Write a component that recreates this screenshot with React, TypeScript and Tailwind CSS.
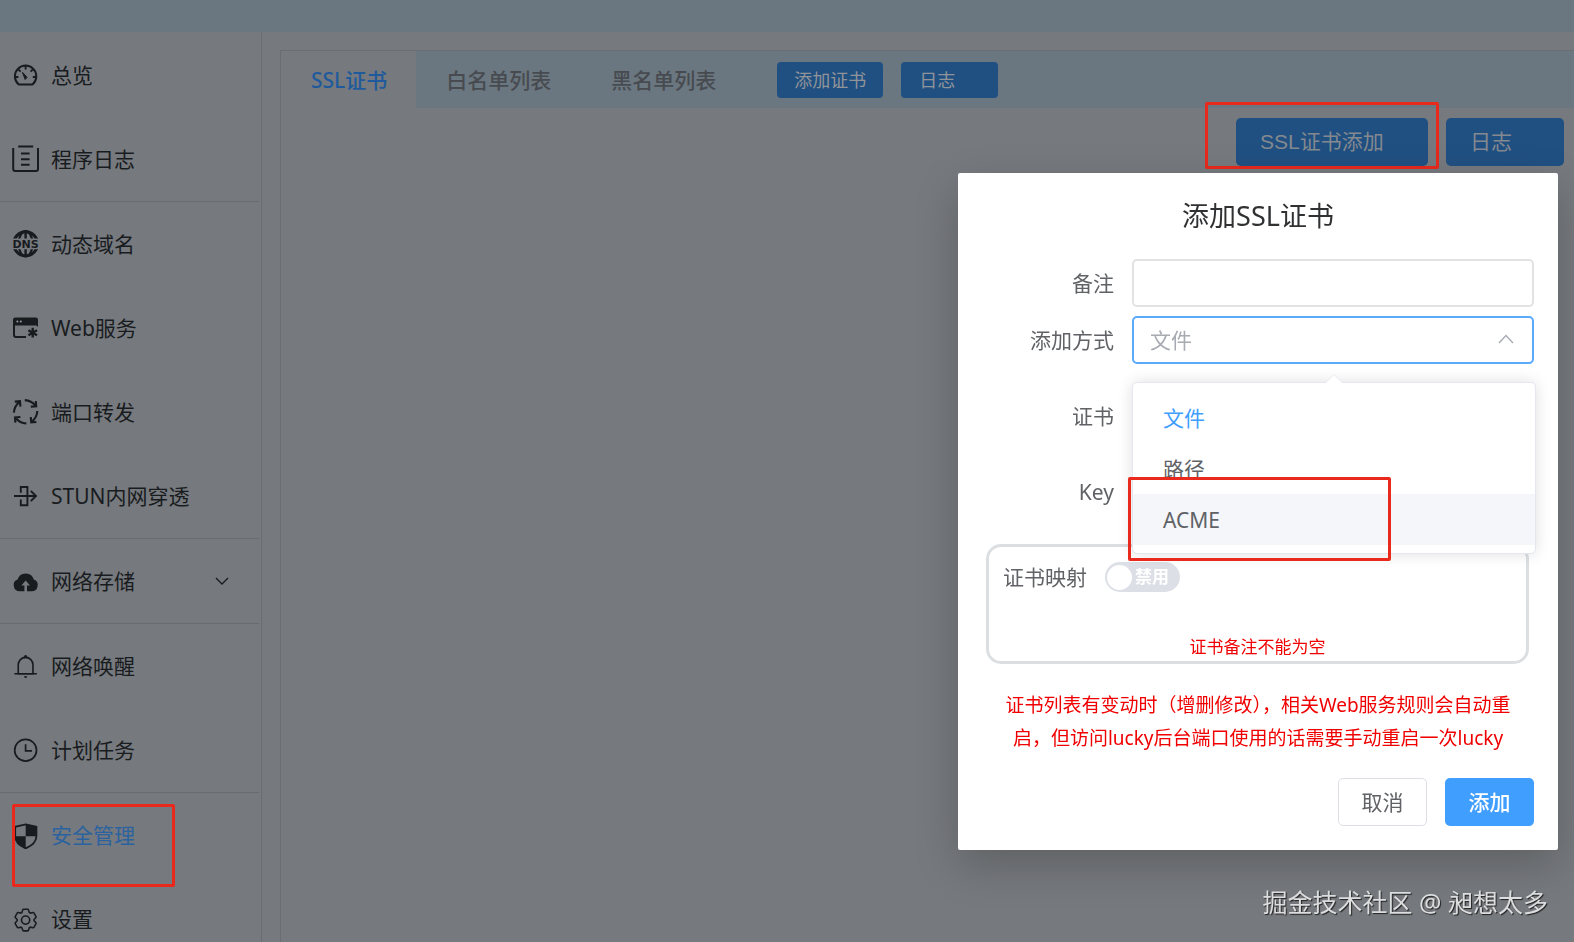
import React, { useState } from "react";

type IconProps = { children: React.ReactNode };

function Icon({ children }: IconProps) {
  return (
    <svg viewBox="0 0 28 28" className="size-7 shrink-0 text-[#191c1f]" fill="none" stroke="currentColor" strokeWidth="2" aria-hidden="true">
      {children}
    </svg>
  );
}

const GaugeIcon = () => (
  <Icon>
    <path d="M6.4 23.2A10.7 10.7 0 1 1 20.8 23.2Q20.2 23.6 19.5 23.6H7.7Q7 23.6 6.4 23.2Z" />
    <path d="M13.6 5v3.4M3 16h3.4M20.8 16h3.4M6.3 8.3l2.3 2.3M20.9 8.3l-2.3 2.3" strokeWidth="1.8" />
    <path d="M10.4 11.2l4.6 5.1-1.8 2.2z" fill="currentColor" strokeWidth="1" strokeLinejoin="round" />
  </Icon>
);

const LogIcon = () => (
  <Icon>
    <path d="M1.2 3V24q0 2 2 2H24q2 0 2-2V3M6.2 1.6H21.2M9 8.6h8.6M9 14.2h8.6M9 19.8h8.6" />
  </Icon>
);

const DnsIcon = () => (
  <Icon>
    <clipPath id="dns-caps">
      <path d="M0 0h28v8.4H0zM0 19.2h28V28H0z" />
    </clipPath>
    <g clipPath="url(#dns-caps)">
      <circle cx="13.6" cy="13.8" r="12" strokeWidth="3" />
      <ellipse cx="13.6" cy="13.8" rx="7" ry="12.6" strokeWidth="2.2" />
      <path d="M13.6 1v26" strokeWidth="2.4" />
    </g>
    <text x="13.6" y="17.8" textAnchor="middle" fill="currentColor" stroke="none" className="font-['DejaVu_Sans'] text-[11px] font-bold">
      DNS
    </text>
  </Icon>
);

const WebIcon = () => (
  <Icon>
    <path d="M1 5.8Q1 3.4 3.4 3.4H23.6Q26 3.4 26 5.8V12.5H24.8V11.6H1Z" fill="currentColor" stroke="none" />
    <path d="M2 10V21q0 2 2 2H14" />
    <path d="M20.7 13.8v9.8M16.4 16.2l8.6 5M25 16.2l-8.6 5" strokeWidth="2.4" />
    <circle cx="5.4" cy="7.6" r="1" fill="#9da0a4" stroke="none" />
    <circle cx="8.8" cy="7.6" r="1" fill="#9da0a4" stroke="none" />
  </Icon>
);

const ForwardIcon = () => (
  <Icon>
    {["", "rotate(90 13.6 13.8)", "rotate(180 13.6 13.8)", "rotate(270 13.6 13.8)"].map((t) => (
      <path key={t} transform={t} d="M1.9 14.6Q2.2 8 7.6 3.8M2.8 3.6L8 3.2L8.4 8.6" strokeWidth="2.1" />
    ))}
  </Icon>
);

const StunIcon = () => (
  <Icon>
    <path d="M2 14H24M18.8 8.8L24 14L18.8 19.2M8.8 10.8V5H15.4V23.2H8.8V17.4" strokeWidth="1.9" />
  </Icon>
);

const CloudIcon = () => (
  <Icon>
    <path
      d="M8 24.2A6 6 0 0 1 5.6 12.6A8.4 8.4 0 0 1 21.8 12.6A6 6 0 0 1 19.4 24.2H15V18.4H18L13.7 13.6L9.4 18.4H12.4V24.2Z"
      fill="currentColor"
      stroke="none"
    />
  </Icon>
);

const BellIcon = () => (
  <Icon>
    <g transform="translate(.5 1.3) scale(.0256)" fill="currentColor" stroke="none">
      <path d="M512 64a64 64 0 0 1 64 64v64H448v-64a64 64 0 0 1 64-64z" />
      <path d="M256 768h512V448a256 256 0 1 0-512 0v320zm256-640a320 320 0 0 1 320 320v384H192V448a320 320 0 0 1 320-320z" />
      <path d="M96 768h832q32 0 32 32t-32 32H96q-32 0-32-32t32-32zm352 128h128a64 64 0 0 1-128 0z" />
    </g>
  </Icon>
);

const ClockIcon = () => (
  <Icon>
    <circle cx="13.6" cy="14.2" r="10.9" strokeWidth="1.7" />
    <path d="M13.6 8.2V14.8H20" strokeWidth="1.7" />
  </Icon>
);

const ShieldIcon = () => (
  <Icon>
    <path d="M13.7 3.4L24.4 5.8V15.5Q24 23 13.7 27.4Q3.4 23 3.2 15.5V5.8Z" strokeWidth="1.8" />
    <path d="M13.7 3.4L24.4 5.8V15.2H13.7ZM3.2 15.2H13.7V27.4Q3.8 23.4 3.2 15.2Z" fill="currentColor" stroke="none" />
  </Icon>
);

const SettingIcon = () => (
  <Icon>
    <g transform="translate(.5 2) scale(.0256)" strokeWidth="64">
      <path
        transform="translate(31 31) scale(.94)"
        d="M600.704 64a32 32 0 0 1 30.464 22.208l35.2 109.376c14.784 7.232 28.928 15.36 42.432 24.512l112.384-24.192a32 32 0 0 1 34.432 15.36L944.32 364.8a32 32 0 0 1-4.032 37.504l-77.12 85.12a357.12 357.12 0 0 1 0 49.024l77.12 85.248a32 32 0 0 1 4.032 37.504l-88.704 153.6a32 32 0 0 1-34.432 15.296L708.8 803.904c-13.44 9.088-27.648 17.28-42.368 24.512l-35.264 109.376A32 32 0 0 1 600.704 960H423.296a32 32 0 0 1-30.464-22.208L357.696 828.48a351.616 351.616 0 0 1-42.56-24.64l-112.32 24.256a32 32 0 0 1-34.432-15.36L79.68 659.2a32 32 0 0 1 4.032-37.504l77.12-85.248a357.12 357.12 0 0 1 0-48.896l-77.12-85.248A32 32 0 0 1 79.68 364.8l88.704-153.6a32 32 0 0 1 34.432-15.296l112.32 24.256c13.568-9.152 27.776-17.408 42.56-24.64l35.2-109.312A32 32 0 0 1 423.296 64z"
      />
      <circle cx="512" cy="512" r="160" />
    </g>
  </Icon>
);

type Item = { label: string; icon: React.ReactNode; active?: boolean; expandable?: boolean };

const groups: Item[][] = [
  [
    { label: "总览", icon: <GaugeIcon /> },
    { label: "程序日志", icon: <LogIcon /> },
  ],
  [
    { label: "动态域名", icon: <DnsIcon /> },
    { label: "Web服务", icon: <WebIcon /> },
    { label: "端口转发", icon: <ForwardIcon /> },
    { label: "STUN内网穿透", icon: <StunIcon /> },
  ],
  [{ label: "网络存储", icon: <CloudIcon />, expandable: true }],
  [
    { label: "网络唤醒", icon: <BellIcon /> },
    { label: "计划任务", icon: <ClockIcon /> },
  ],
  [
    { label: "安全管理", icon: <ShieldIcon />, active: true },
    { label: "设置", icon: <SettingIcon /> },
  ],
];

function Sidebar() {
  return (
    <nav className="w-[262px] shrink-0 border-r border-[#6a6d72] pt-px">
      {groups.map((group, i) => (
        <ul key={i} className={i > 0 ? "mr-0.5 border-t border-[#686b70]" : "mr-0.5"}>
          {group.map((item) => (
            <li key={item.label} className="relative">
              <a
                href="#"
                className={`flex h-[84px] items-center gap-[11px] pr-[30px] pl-3 ${item.active ? "text-[#2b62a0]" : "text-[#191c1f]"}`}
              >
                {item.icon}
                <span className="grow">{item.label}</span>
                {item.expandable && (
                  <svg viewBox="0 0 14 8" className="h-2 w-3.5" fill="none" stroke="currentColor" strokeWidth="1.3" aria-hidden="true">
                    <path d="M1 1l6 6 6-6" />
                  </svg>
                )}
              </a>
              {item.active && (
                <span className="pointer-events-none absolute top-[11px] left-3 h-[83px] w-[163px] rounded-xs border-3 border-[#e8291c]" />
              )}
            </li>
          ))}
        </ul>
      ))}
    </nav>
  );
}

function Panel() {
  return (
    <section className="mt-[18px] ml-[18px] grow border-t border-l border-[#6a6d71]">
      <div className="flex h-[57px] items-center bg-[#6b7780]">
        <div role="tablist" className="flex h-full font-medium">
          <button role="tab" aria-selected="true" className="bg-[#76797d] pr-[29px] pl-[30px] text-[#1f5a9c]">
            SSL证书
          </button>
          <button role="tab" aria-selected="false" className="px-[30px] text-[#474b50]">
            白名单列表
          </button>
          <button role="tab" aria-selected="false" className="px-[30px] text-[#474b50]">
            黑名单列表
          </button>
        </div>
        <div className="ml-[31px] flex gap-[18px] text-lg text-[#909499]">
          <button className="h-9 rounded bg-[#205082] px-[17px]">添加证书</button>
          <button className="h-9 w-[97px] rounded bg-[#205082] px-[18px] text-left">日志</button>
        </div>
      </div>
      <div className="flex justify-end gap-[18px] pt-2.5 pr-2.5 text-[#84898f] font-['Liberation_Sans','Noto_Sans_CJK_SC',sans-serif]">
        <div className="relative">
          <button className="h-12 w-48 rounded-[5px] bg-[#205082] px-6 text-left">SSL证书添加</button>
          <span className="pointer-events-none absolute -top-4 -right-[11px] -bottom-[3px] -left-[31px] rounded-xs border-3 border-[#e8291c]" />
        </div>
        <button className="h-12 w-[118px] rounded-[5px] bg-[#205082] px-6 text-left">日志</button>
      </div>
    </section>
  );
}

const modes = ["文件", "路径", "ACME"];

function ModeSelect() {
  const [mode, setMode] = useState("文件");
  return (
    <div className="relative grow">
      <select
        id="mode"
        value={mode}
        onChange={(e) => setMode(e.target.value)}
        className="block h-12 w-full appearance-none rounded-[5px] border-2 border-[#5aa9fb] bg-white px-4 text-[#a8abb2] outline-none"
      >
        {modes.map((m) => (
          <option key={m}>{m}</option>
        ))}
      </select>
      <svg viewBox="0 0 16 10" className="pointer-events-none absolute top-[18px] right-5 h-2.5 w-4" fill="none" stroke="#a8abb2" strokeWidth="1.4" aria-hidden="true">
        <path d="M1 9l7-7.5L15 9" />
      </svg>
      <div className="absolute top-[66px] -right-0.5 left-0 z-10 rounded-[5px] border border-[#e4e7ed] bg-white pt-[9px] pb-2 shadow-[0_0_15px_rgba(0,0,0,0.13)]">
        <span className="absolute -top-[7px] left-1/2 size-3 -translate-x-1/2 rotate-45 rounded-tl-xs border-t border-l border-[#e9ebef] bg-white" />
        <div role="listbox" className="relative bg-white">
          {modes.map((m) => (
            <button
              key={m}
              role="option"
              aria-selected={m === mode}
              onClick={() => setMode(m)}
              className={`block h-[51px] w-full px-[30px] text-left ${m === "ACME" ? "bg-[#f4f6fa]" : ""} ${m === mode ? "text-[#409eff]" : "text-[#606266]"}`}
            >
              {m}
            </button>
          ))}
        </div>
        <span className="pointer-events-none absolute -bottom-2 -left-[5px] h-[84px] w-[263px] rounded-xs border-3 border-[#e8291c]" />
      </div>
    </div>
  );
}

function CertificateDialog() {
  return (
    <div
      role="dialog"
      aria-labelledby="dialog-title"
      className="w-[600px] rounded-xs bg-white px-6 pt-[26px] pb-6 text-[#606266] shadow-[0_15px_45px_rgba(0,0,0,0.2)]"
    >
      <h2 id="dialog-title" className="text-center text-[27px] leading-[34px] text-[#303133]">
        添加SSL证书
      </h2>
      <form className="mt-[26px]" onSubmit={(e) => e.preventDefault()}>
        <div className="flex items-center gap-[18px]">
          <label htmlFor="remark" className="w-[132px] text-right">备注</label>
          <input id="remark" type="text" className="h-12 min-w-0 grow rounded-[5px] border-2 border-[#e2e2e4] px-4 outline-none" />
        </div>
        <div className="mt-[9px] flex items-center gap-[18px]">
          <label htmlFor="mode" className="w-[132px] text-right">添加方式</label>
          <ModeSelect />
        </div>
        <div className="mt-3.5 flex h-[76px] items-center">
          <label htmlFor="cert" className="w-[132px] text-right">证书</label>
          <input id="cert" type="file" className="sr-only" />
        </div>
        <div className="flex h-[76px] items-center">
          <label htmlFor="key" className="w-[132px] text-right">Key</label>
          <input id="key" type="file" className="sr-only" />
        </div>
        <div className="mt-3.5 mr-[5px] ml-1 flex h-[120px] flex-col justify-between rounded-[15px] border-3 border-[#dcdfe2]">
          <div className="flex items-center gap-[18px] pt-[15px] pl-3.5">
            <label htmlFor="mapping">证书映射</label>
            <label className="flex h-[30px] w-[75px] items-center gap-[3px] rounded-full bg-[#dcdfe6] pl-0.5 text-[17px] font-bold text-white">
              <input id="mapping" type="checkbox" role="switch" className="sr-only" />
              <span className="size-[25px] rounded-full bg-white" />
              禁用
            </label>
          </div>
          <p className="text-center text-[17px] leading-7 text-[#f00000]">证书备注不能为空</p>
        </div>
        <p className="mt-[25px] px-3 text-center text-[19px] leading-[33px] text-[#f00000]">
          证书列表有变动时（增删修改），相关Web服务规则会自动重启，但访问lucky后台端口使用的话需要手动重启一次lucky
        </p>
        <div className="mt-[23px] flex justify-end gap-[18px]">
          <button type="button" className="h-12 w-[89px] rounded-[5px] border border-[#dcdfe6] bg-white">取消</button>
          <button type="submit" className="h-12 w-[89px] rounded-[5px] bg-[#409eff] font-medium text-white">添加</button>
        </div>
      </form>
    </div>
  );
}

export default function App() {
  return (
    <div className="flex h-screen flex-col overflow-hidden bg-[#76797d] font-['Noto_Sans','Noto_Sans_CJK_SC',sans-serif] text-[21px] leading-[30px]">
      <header className="h-8 shrink-0 bg-[#6b7780]" />
      <div className="flex min-h-0 grow">
        <Sidebar />
        <Panel />
      </div>
      <div className="fixed inset-0 flex items-start justify-end pt-[173px] pr-4">
        <CertificateDialog />
      </div>
      <p className="fixed right-[26px] bottom-[22px] text-[25px] leading-9 text-[#dcdddf] [text-shadow:1px_1px_1px_#222]">
        掘金技术社区 @ 昶想太多
      </p>
    </div>
  );
}
